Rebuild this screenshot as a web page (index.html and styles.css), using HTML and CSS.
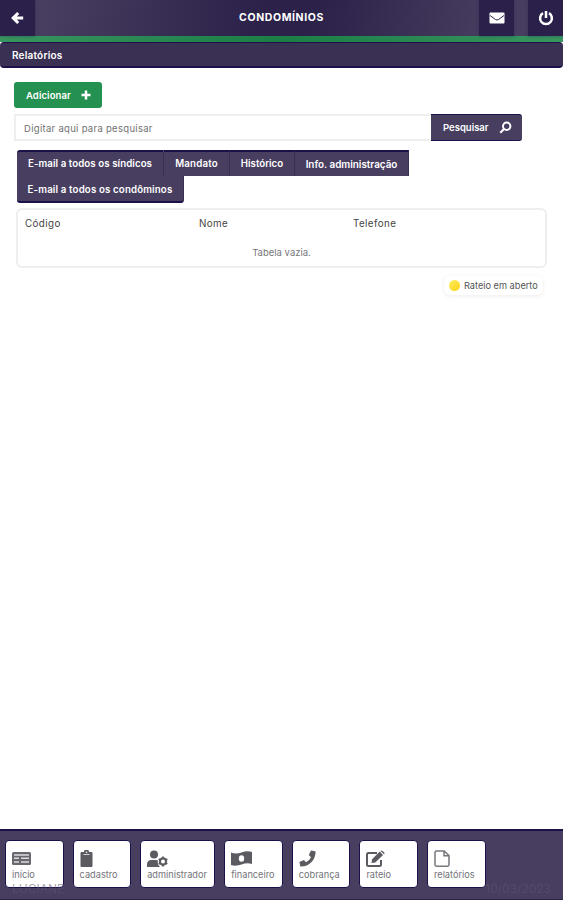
FILE: index.html
```html
<!DOCTYPE html>
<html lang="pt-BR">
<head>
	<meta charset="UTF-8">
	<meta name="viewport" content="width=device-width, initial-scale=1.0">
	<title>Condomínios</title>
	<link rel="stylesheet" href="styles.css">
</head>
<body>
	<header class="topbar">
		<button class="top-btn" aria-label="Voltar">
			<svg width="14" height="14" viewBox="0 0 14 14"><path d="M7.2 2 2.2 7l5 5M3 7h9.2" fill="none" stroke="#fff" stroke-width="3"/></svg>
		</button>
		<h1>CONDOMÍNIOS</h1>
		<div class="top-actions">
			<button class="top-btn" aria-label="Mensagens">
				<svg width="16" height="12" viewBox="0 0 16 12"><rect x=".5" y=".5" width="15" height="11" rx="1" fill="#fff"/><path d="m1 3.500 5.500 4q1.500 1 3 0l5.500-4" fill="none" stroke="#2b2148" stroke-width="1"/></svg>
			</button>
			<button class="top-btn" aria-label="Sair">
				<svg width="16" height="16" viewBox="0 0 16 16" fill="none" stroke="#fff" stroke-width="2.500"><path d="M5 3.100a5.900 5.900 0 1 0 6 0M8 1v7"/></svg>
			</button>
		</div>
	</header>
	<div class="section-title">Relatórios</div>

	<main>
		<button class="btn btn-add"><span>Adicionar</span>
			<svg width="10" height="10" viewBox="0 0 10 10"><path d="M5 .5v9M.5 5h9" stroke="#fff" stroke-width="2.500"/></svg>
		</button>
		<form class="search">
			<input type="text" placeholder="Digitar aqui para pesquisar">
			<button type="button" class="btn btn-search"><span>Pesquisar</span>
				<svg width="13" height="13" viewBox="0 0 13 13" fill="none" stroke="#fff" stroke-width="2"><circle cx="7.700" cy="5.200" r="3.700"/><path d="M5 8 1.300 11.700"/></svg>
			</button>
		</form>
		<div class="tabs">
			<button class="tab-sindicos">E-mail a todos os síndicos</button>
			<button class="tab-mandato">Mandato</button>
			<button class="tab-historico">Histórico</button>
			<button class="tab-info">Info. administração</button>
			<button class="tab-condominos">E-mail a todos os condôminos</button>
		</div>
		<section class="table">
			<div class="table-head">
				<span>Código</span>
				<span>Nome</span>
				<span>Telefone</span>
			</div>
			<p class="empty">Tabela vazia.</p>
		</section>
		<div class="legend"><i></i><span>Rateio em aberto</span></div>
	</main>

	<footer class="bottombar">
		<nav>
			<a class="item">
				<svg width="20" height="17" viewBox="0 0 20 17"><rect x="0" y="2" width="19" height="13" rx="1.500" fill="#68686e"/><path d="M2 5h15M2 8.300h5M9 8.300h8M2 12h5M9 12h8" stroke="#dcdcdf" stroke-width="1.500"/></svg>
				<span>início</span>
			</a>
			<a class="item">
				<svg width="14" height="17" viewBox="0 0 14 17"><path d="M1.500 2H4a2.500 2.500 0 0 1 5 0h2.500q1 0 1 1v13q0 1-1 1h-10q-1 0-1-1V3q0-1 1-1z" fill="#5b5b61"/><path d="M3.500 4.500h6" stroke="#d5d5d8"/><circle cx="6.500" cy="2.300" r=".8" fill="#fff"/></svg>
				<span>cadastro</span>
			</a>
			<a class="item item-wide">
				<svg width="21" height="17" viewBox="0 0 21 17"><circle cx="7" cy="4.500" r="4" fill="#5b5b61"/><path d="M0 17v-2.500Q0 10 4.500 10H9q1 0 2 .5-1 3.500 2 6.500z" fill="#5b5b61"/><circle cx="16" cy="11.500" r="3.100" fill="none" stroke="#5b5b61" stroke-width="2.200"/><path d="M16 6.500v2M16 14.500v2M11.700 9l1.700 1M18.600 13l1.700 1M11.700 14l1.700-1M18.600 10l1.700-1" stroke="#5b5b61" stroke-width="1.800"/></svg>
				<span>administrador</span>
			</a>
			<a class="item">
				<svg width="21" height="17" viewBox="0 0 21 17"><path d="M0 2.500q5 2 10.500 0T21 2v12q-5-1.500-10.500.5T0 15z" fill="#5b5b61"/><ellipse cx="10.500" cy="8.500" rx="2.700" ry="3.300" fill="#fff"/></svg>
				<span>financeiro</span>
			</a>
			<a class="item">
				<svg width="17" height="17" viewBox="0 0 17 17"><path d="m12 .4 4 .8q.6.2.6.8C16.300 10.500 10.500 16.300 2 16.600q-.6 0-.8-.6l-.8-4L5 10l2 2.300q3.500-1.600 5-5L9.800 5z" fill="#5b5b61"/></svg>
				<span>cobrança</span>
			</a>
			<a class="item">
				<svg width="20" height="17" viewBox="0 0 20 17"><path d="M11 3H2.500Q1 3 1 4.500v10Q1 16 2.500 16h11q1.500 0 1.500-1.500V10" fill="none" stroke="#5b5b61" stroke-width="2"/><path d="m5.500 13 .6-3.800 7.600-7.600 3.300 3.300-7.700 7.600zM14.500.9q1-1 2 0L18 2.300q1 1 0 2z" fill="#5b5b61"/></svg>
				<span>rateio</span>
			</a>
			<a class="item">
				<svg width="16" height="17" viewBox="0 0 16 17" fill="none" stroke="#77777c" stroke-width="1.500"><path d="M2.500 1h7.700L15 5.500v9.300q0 1.400-1.500 1.400h-11Q1 16.200 1 14.800V2.400Q1 1 2.500 1zM10 1v4.800h5"/></svg>
				<span>relatórios</span>
			</a>
		</nav>
		<div class="status"><span>LUCIANE</span><span>10/03/2023</span></div>
	</footer>
</body>
</html>
```
FILE: styles.css
```css
:root {
	--purple: #483e60;
	--purple-dark: #2a2049;
	--edge: #1c1048;
	--green: #259150;
}
*, *:before, *:after {
	box-sizing: border-box;
}
body {
	display: flex;
	flex-direction: column;
	height: 100vh;
	margin: 0;
	overflow: hidden;
	background: #fff;
	font-family: Inter, "Liberation Sans", sans-serif;
	font-size: 9.5px;
}
button {
	margin: 0;
	border: 0;
	font: inherit;
	color: #fff;
}
svg {
	display: block;
	flex: none;
}

.topbar {
	display: grid;
	grid-template-columns: 85px 1fr 85px;
	height: 42px;
	flex: none;
	border-bottom: 6px solid;
	border-image: linear-gradient(90deg, #389660, #1c7d46 50%, #389660) 1;
	background: linear-gradient(100deg, #483e60 8%, #2b2149 47%, #2b2149 55%, #483e60 88%);
}
.topbar h1 {
	margin: 0;
	font-size: 10.5px;
	font-weight: 700;
	letter-spacing: .6px;
	line-height: 36px;
	text-align: center;
	color: #fff;
}
.top-btn {
	display: grid;
	place-items: center;
	width: 35px;
	height: 36px;
	padding: 0;
	background: var(--purple-dark);
	box-shadow: 0 0 3px #2a204980;
}
.top-actions {
	display: flex;
	justify-content: flex-end;
	gap: 14px;
}
.section-title {
	height: 26px;
	flex: none;
	padding-left: 12px;
	border-bottom: 2px solid var(--edge);
	border-top: 1px solid var(--edge);
	border-radius: 4px;
	background: #3a3053;
	color: #fff;
	font-size: 10px;
	font-weight: 600;
	letter-spacing: .2px;
	line-height: 25px;
}

main {
	flex: 1;
	padding: 14px 16px 0 14px;
}
.btn {
	display: flex;
	align-items: center;
	justify-content: space-between;
	height: 27px;
	padding: 0 10px 0 12px;
	border-radius: 3px;
	font-weight: 600;
}
.btn-add {
	width: 88px;
	height: 26px;
	padding-right: 11px;
	background: var(--green);
	letter-spacing: .1px;
}
.search {
	display: flex;
	width: 508px;
	margin-top: 6px;
}
.search input {
	flex: 1;
	min-width: 0;
	height: 27px;
	padding: 1px 8px 0;
	border: 2px solid #eee;
	border-right: 0;
	font: inherit;
	letter-spacing: .3px;
}
.search input::placeholder {
	color: #717171;
	opacity: 1;
}
.btn-search {
	width: 91px;
	border-top: 1px solid var(--edge);
	border-bottom: 1px solid var(--edge);
	border-radius: 0 3px 3px 0;
	background: var(--purple);
}
.tabs {
	display: flex;
	flex-wrap: wrap;
	width: 400px;
	margin: 9px 0 0 3px;
}
.tabs button {
	height: 26px;
	padding: 0;
	border-top: 2px solid var(--edge);
	border-right: 1px solid #3a3053;
	background: var(--purple);
	font-size: 9.7px;
	font-weight: 600;
	line-height: 22px;
	white-space: nowrap;
}
.tabs .tab-sindicos {
	width: 147px;
	border-radius: 3px 0 0 0;
	letter-spacing: .08px;
}
.tabs .tab-mandato {
	width: 66px;
	letter-spacing: .2px;
}
.tabs .tab-historico {
	width: 65px;
}
.tabs .tab-info {
	width: 114px;
	font-size: 9.9px;
}
.tabs .tab-condominos {
	width: 167px;
	height: 27px;
	padding-top: 2px;
	border-top: 0;
	border-bottom: 2px solid var(--edge);
	border-radius: 0 0 3px 3px;
	letter-spacing: .15px;
}

.table {
	height: 60px;
	margin: 5px 0 0 2px;
	padding: 0 7px;
	border: 2px solid #eee;
	border-radius: 6px;
}
.table-head {
	display: grid;
	grid-template-columns: 174px 154px 1fr;
	height: 27px;
	color: #444;
	font-size: 9.8px;
	letter-spacing: .4px;
	line-height: 27px;
}
.empty {
	margin: 0;
	color: #77777b;
	line-height: 31px;
	text-align: center;
}
.legend {
	display: flex;
	align-items: center;
	gap: 4px;
	width: 99px;
	height: 19px;
	margin: 8px 4px 0 auto;
	padding-left: 5px;
	border-radius: 6px;
	box-shadow: 0 1px 4px #00000014;
	color: #555;
	font-size: 9.2px;
	white-space: nowrap;
}
.legend i {
	width: 11px;
	height: 11px;
	border-radius: 50%;
	background: linear-gradient(135deg, #ffed65, #fbd313);
}

.bottombar {
	position: relative;
	height: 71px;
	flex: none;
	padding: 9px 5px 0;
	border-top: 2px solid var(--edge);
	border-bottom: 1px solid #2a2049;
	background: var(--purple);
}
.bottombar nav {
	display: flex;
	gap: 9px;
}
.item {
	display: flex;
	flex-direction: column;
	width: 58.6px;
	height: 48px;
	padding: 9px 0 0 6px;
	border: 1px solid var(--edge);
	border-radius: 4px;
	background: #fff;
	color: #737378;
	font-size: 9.2px;
	line-height: 14px;
	white-space: nowrap;
}
.item span {
	margin-top: 1px;
}
.item-wide {
	width: 75px;
}
/* faint user and date line under the menu */
.status {
	position: absolute;
	left: 12px;
	right: 12px;
	bottom: 3px;
	display: flex;
	justify-content: space-between;
	color: #5e566d8c;
	font-size: 12px;
	line-height: 14px;
}
```
